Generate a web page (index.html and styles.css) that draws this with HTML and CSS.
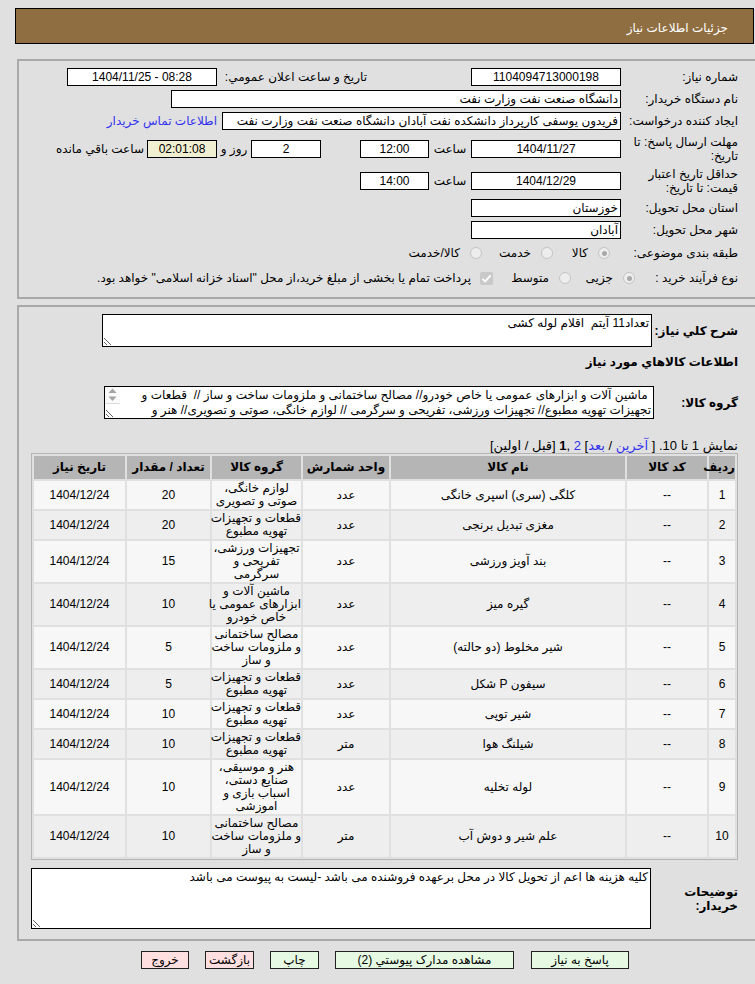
FILE: index.html
```html
<!DOCTYPE html>
<html lang="fa">
<head>
<meta charset="utf-8">
<title>جزئیات اطلاعات نیاز</title>
<link rel="stylesheet" href="styles.css">
</head>
<body>
<div class="title-bar" dir="rtl">جزئیات اطلاعات نیاز</div>

<section class="panel panel-info" dir="rtl">
  <div class="row h22">
    <div class="lbl">شماره نیاز:</div>
    <div class="field w150 center">1104094713000198</div>
    <div class="lbl-pub">تاريخ و ساعت اعلان عمومي:</div>
    <div class="field w150 center" dir="ltr">1404/11/25 - 08:28</div>
  </div>
  <div class="row h22">
    <div class="lbl">نام دستگاه خریدار:</div>
    <div class="field w450">دانشگاه صنعت نفت وزارت نفت</div>
  </div>
  <div class="row h22">
    <div class="lbl">ایجاد کننده درخواست:</div>
    <div class="field w399">فریدون یوسفی کارپرداز دانشکده نفت آبادان دانشگاه صنعت نفت وزارت نفت</div>
    <a class="contact" href="#">اطلاعات تماس خریدار</a>
  </div>
  <div class="row h33">
    <div class="lbl">مهلت ارسال پاسخ: تا<br>تاریخ:</div>
    <div class="field w150 center">1404/11/27</div>
    <div class="hour">ساعت</div>
    <div class="field w69 center">12:00</div>
    <div class="field w70 center days">2</div>
    <div class="day-sep">روز و</div>
    <div class="field w70 center timer">02:01:08</div>
    <div class="remain">ساعت باقي مانده</div>
  </div>
  <div class="row h32">
    <div class="lbl">حداقل تاریخ اعتبار<br>قیمت: تا تاریخ:</div>
    <div class="field w150 center">1404/12/29</div>
    <div class="hour">ساعت</div>
    <div class="field w69 center">14:00</div>
  </div>
  <div class="row h21">
    <div class="lbl">استان محل تحویل:</div>
    <div class="field w150">خوزستان</div>
  </div>
  <div class="row h23">
    <div class="lbl">شهر محل تحویل:</div>
    <div class="field w150">آبادان</div>
  </div>
  <div class="row h24">
    <div class="lbl">طبقه بندی موضوعی:</div>
    <div class="opts first-opt">
      <label class="opt o57"><span class="radio on"></span>کالا</label>
      <label class="opt o71"><span class="radio"></span>خدمت</label>
      <label class="opt"><span class="radio"></span>کالا/خدمت</label>
    </div>
  </div>
  <div class="row h26">
    <div class="lbl lbl-narrow">نوع فرآیند خرید :</div>
    <div class="opts">
      <label class="opt o64"><span class="radio on"></span>جزیی</label>
      <label class="opt o78"><span class="radio"></span>متوسط</label>
      <label class="opt">
        <span class="check"><svg width="13" height="13" viewBox="0 0 13 13"><path d="M2.5 6.8 L5.2 9.4 L10.6 3.4" fill="none" stroke="#fff" stroke-width="1.8"/></svg></span>پرداخت تمام یا بخشی از مبلغ خرید،از محل "اسناد خزانه اسلامی" خواهد بود.
      </label>
    </div>
  </div>
</section>

<section class="panel panel-items" dir="rtl">
  <div class="row">
    <div class="lbl-b w86">شرح کلي نیاز:</div>
    <textarea class="note note-desc" readonly>تعداد11 آیتم  اقلام لوله کشی</textarea>
  </div>
  <div class="section-title">اطلاعات کالاهاي مورد نیاز</div>
  <div class="row">
    <div class="lbl-b w84">گروه کالا:</div>
    <div class="group-box">
      <textarea class="note note-group" readonly> ماشین آلات و ابزارهای عمومی یا خاص خودرو// مصالح ساختمانی و ملزومات ساخت و ساز //  قطعات و تجهیزات تهویه مطبوع// تجهیزات ورزشی، تفریحی و سرگرمی // لوازم خانگی، صوتی و تصویری// هنر و موسیقی، صنایع دستی، اسباب بازی و اموزشی</textarea>
      <div class="scroll-arrows">
        <svg width="15" height="16" viewBox="0 0 15 16">
          <path d="M3.5 6 L11.5 6 L7.5 1.5 Z" fill="#a3a3a3"/>
          <path d="M3.5 9.5 L11.5 9.5 L7.5 14 Z" fill="#a3a3a3"/>
        </svg>
      </div>
    </div>
  </div>
  <div class="pager">نمایش 1 تا 10. [ <a href="#">آخرین</a> / <a href="#">بعد</a>] <a href="#">2</a> ,<b>1</b> [قبل / اولین]</div>

  <table class="items">
    <colgroup>
      <col style="width:26px"><col style="width:80px"><col style="width:234px"><col style="width:86px"><col style="width:89px"><col style="width:83px"><col style="width:91px">
    </colgroup>
    <thead>
      <tr><th>ردیف</th><th>کد کالا</th><th>نام کالا</th><th>واحد شمارش</th><th>گروه کالا</th><th>تعداد / مقدار</th><th>تاریخ نیاز</th></tr>
    </thead>
    <tbody>
      <tr><td>1</td><td>--</td><td>کلگی (سری) اسپری خانگی</td><td>عدد</td><td class="grp">لوازم خانگی،<br>صوتی و تصویری</td><td>20</td><td>1404/12/24</td></tr>
      <tr><td>2</td><td>--</td><td>مغزی تبدیل برنجی</td><td>عدد</td><td class="grp">قطعات و تجهیزات<br>تهویه مطبوع</td><td>20</td><td>1404/12/24</td></tr>
      <tr><td>3</td><td>--</td><td>بند آویز ورزشی</td><td>عدد</td><td class="grp">تجهیزات ورزشی،<br>تفریحی و<br>سرگرمی</td><td>15</td><td>1404/12/24</td></tr>
      <tr><td>4</td><td>--</td><td>گیره میز</td><td>عدد</td><td class="grp">ماشین آلات و<br>ابزارهای عمومی یا<br>خاص خودرو</td><td>10</td><td>1404/12/24</td></tr>
      <tr><td>5</td><td>--</td><td>شیر مخلوط (دو حالته)</td><td>عدد</td><td class="grp">مصالح ساختمانی<br>و ملزومات ساخت<br>و ساز</td><td>5</td><td>1404/12/24</td></tr>
      <tr><td>6</td><td>--</td><td>سیفون P شکل</td><td>عدد</td><td class="grp">قطعات و تجهیزات<br>تهویه مطبوع</td><td>5</td><td>1404/12/24</td></tr>
      <tr><td>7</td><td>--</td><td>شیر توپی</td><td>عدد</td><td class="grp">قطعات و تجهیزات<br>تهویه مطبوع</td><td>10</td><td>1404/12/24</td></tr>
      <tr><td>8</td><td>--</td><td>شیلنگ هوا</td><td>متر</td><td class="grp">قطعات و تجهیزات<br>تهویه مطبوع</td><td>10</td><td>1404/12/24</td></tr>
      <tr><td>9</td><td>--</td><td>لوله تخلیه</td><td>عدد</td><td class="grp">هنر و موسیقی،<br>صنایع دستی،<br>اسباب بازی و<br>اموزشی</td><td>10</td><td>1404/12/24</td></tr>
      <tr><td>10</td><td>--</td><td>علم شیر و دوش آب</td><td>متر</td><td class="grp">مصالح ساختمانی<br>و ملزومات ساخت<br>و ساز</td><td>10</td><td>1404/12/24</td></tr>
    </tbody>
  </table>

  <div class="row buyer-row">
    <div class="lbl-b w87">توضیحات<br>خریدار:</div>
    <textarea class="note note-buyer" readonly>کلیه هزینه ها اعم از تحویل کالا در محل برعهده فروشنده می باشد -لیست به پیوست می باشد</textarea>
  </div>
</section>

<div class="actions" dir="rtl">
  <button class="btn ok b98">پاسخ به نیاز</button>
  <button class="btn ok b179">مشاهده مدارک پیوستي (2)</button>
  <button class="btn ok b49">چاپ</button>
  <button class="btn warn b49">بازگشت</button>
  <button class="btn warn b48">خروج</button>
</div>
</body>
</html>
```

FILE: styles.css
```css
* { box-sizing: border-box; }

html, body {
  margin: 0;
  padding: 0;
  overflow: hidden;
}

body {
  width: 755px;
  height: 984px;
  background: #e0e0e0;
  color: #000;
  font: 12px "Liberation Sans", "DejaVu Sans", sans-serif;
}

/* page heading bar */
.title-bar {
  margin: 8px 0 0 15px;
  width: 739px;
  height: 36px;
  background: #8f6e41;
  border: 1px solid #000;
  color: #fff;
  padding: 12px 25px 0 0;
  line-height: 14px;
}

/* framed sections */
.panel {
  margin-left: 17px;
  width: 745px;
  border: 2px solid #a9a9a9;
  padding-right: 22px;
}

.panel-info {
  margin-top: 15px;
  padding-top: 5px;
  padding-bottom: 6px;
}

.panel-items {
  margin-top: 6px;
  padding-top: 7px;
  padding-bottom: 10px;
}

.row {
  display: flex;
  align-items: center;
}

.h21 { height: 21px; }
.h22 { height: 22px; }
.h23 { height: 23px; }
.h24 { height: 24px; }
.h26 { height: 26px; }
.h32 { height: 32px; }
.h33 { height: 33px; }

.lbl {
  flex: none;
  width: 117px;
  line-height: 14px;
  white-space: nowrap;
}

.lbl-narrow { width: 103px; }

.lbl-pub {
  flex: none;
  width: 150px;
  margin-right: 104px;
  white-space: nowrap;
}

/* read-only value boxes */
.field {
  flex: none;
  height: 18px;
  border: 1px solid #000;
  background: #fff;
  line-height: 16px;
  padding: 0 2px;
  white-space: nowrap;
  overflow: hidden;
}

.center { text-align: center; }
.w69 { width: 69px; }
.w70 { width: 70px; }
.w150 { width: 150px; }
.w399 { width: 399px; }
.w450 { width: 450px; }

.contact {
  margin-right: 5px;
  color: #3333ee;
  text-decoration: none;
  white-space: nowrap;
}

.hour {
  flex: none;
  width: 42px;
  text-align: center;
}

.days { margin-right: 39px; }

.day-sep {
  flex: none;
  width: 34px;
  text-align: center;
}

.timer { background: #f1efd2; }

.remain {
  margin-right: 3px;
  white-space: nowrap;
}

/* option groups */
.opts {
  display: flex;
  align-items: center;
}

.first-opt { margin-right: 11px; }

.opt {
  flex: none;
  display: flex;
  align-items: center;
  white-space: nowrap;
}

.o57 { width: 57px; }
.o64 { width: 64px; }
.o71 { width: 71px; }
.o78 { width: 78px; }

.radio {
  flex: none;
  position: relative;
  width: 12px;
  height: 12px;
  margin-left: 10px;
  border: 1px solid #c4c4c4;
  border-radius: 50%;
  background: #ededed;
}

.radio.on::after {
  content: "";
  position: absolute;
  left: 2.5px;
  top: 2.5px;
  width: 5px;
  height: 5px;
  border-radius: 50%;
  background: #a8a8a8;
}

.check {
  flex: none;
  width: 13px;
  height: 13px;
  margin-left: 9px;
  background: #c9c9c9;
  border-radius: 2px;
}

.check svg { display: block; }

/* section with goods */
.lbl-b {
  flex: none;
  font-weight: bold;
  line-height: 14px;
  white-space: nowrap;
}

.w84 { width: 84px; }
.w86 { width: 86px; }
.w87 { width: 87px; }

.note {
  flex: none;
  display: block;
  margin: 0;
  border: 1px solid #000;
  background: #fff;
  padding: 1px 2px;
  font: 12px "Liberation Sans", "DejaVu Sans", sans-serif;
  line-height: 15px;
  color: #000;
  outline: none;
}

.note-desc {
  width: 550px;
  height: 33px;
  resize: both;
}

.group-box {
  flex: none;
  position: relative;
  width: 550px;
  height: 33px;
}

.note-group {
  width: 100%;
  height: 100%;
  padding: 1px 2px 1px 17px;
  overflow: hidden;
  resize: both;
}

/* scroll arrows drawn over the left gutter of the group list */
.scroll-arrows {
  position: absolute;
  left: 1px;
  top: 1px;
  width: 15px;
  height: 17px;
  background: #fafafa;
  border-bottom: 1px solid #dcdcdc;
}

.scroll-arrows svg { display: block; }

.note-buyer {
  width: 620px;
  height: 61px;
  resize: both;
}

.section-title {
  margin-top: 8px;
  font-weight: bold;
  line-height: 14px;
}

.panel-items .section-title + .row { margin-top: 17px; }

.pager {
  margin-top: 20px;
  font-size: 13px;
  line-height: 14px;
}

.pager a {
  color: #3333ee;
  text-decoration: none;
}

/* goods table */
.items {
  width: 707px;
  table-layout: fixed;
  border-collapse: separate;
  border-spacing: 2px;
  border: 1px solid #b4b4b4;
}

.items th,
.items td {
  padding: 1px 0;
  line-height: 13px;
  text-align: center;
  vertical-align: middle;
}

.items th {
  padding: 5px 0;
  background: #b5b5b5;
  font-weight: bold;
  white-space: nowrap;
}

.items tbody tr:nth-child(odd) td { background: #f7f7f7; }
.items tbody tr:nth-child(even) td { background: #eeeeee; }

.items td.grp { white-space: nowrap; }

.buyer-row { margin-top: 8px; }

/* bottom buttons */
.actions {
  display: flex;
  margin-top: 10px;
  padding-right: 126px;
}

.btn {
  flex: none;
  height: 18px;
  margin: 0 0 0 16px;
  padding: 0;
  border: 1px solid #222;
  border-radius: 0;
  font: 12px "Liberation Sans", "DejaVu Sans", sans-serif;
  line-height: 16px;
  color: #000;
}

.btn.ok { background: #e6fae3; }
.btn.warn { background: #ffdfdf; }

.b48 { width: 48px; }
.b49 { width: 49px; }
.b98 { width: 98px; margin-left: 17px; }
.b179 { width: 179px; }
```
